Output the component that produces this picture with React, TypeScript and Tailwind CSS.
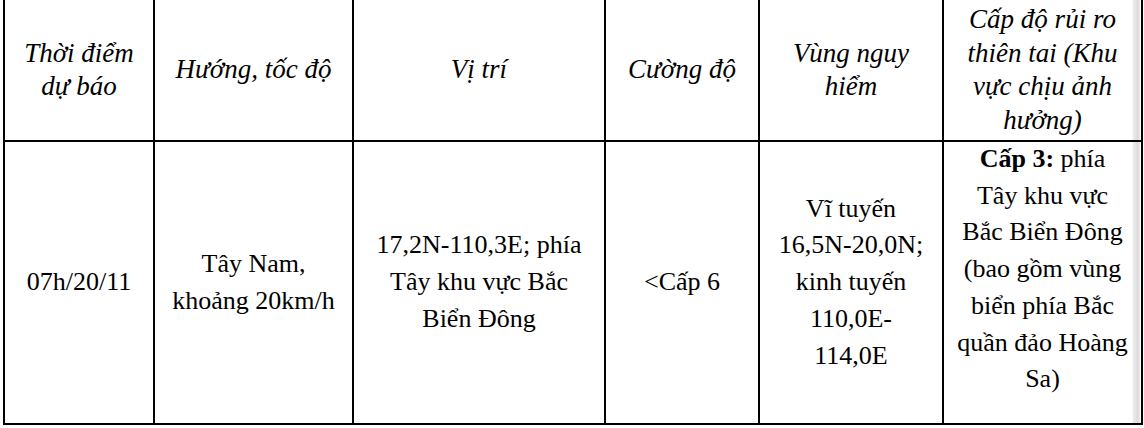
const serif = "font-['Liberation_Serif','Times_New_Roman',serif]"

const headers: string[][] = [
    ["Thời điểm", "dự báo"],
    ["Hướng, tốc độ"],
    ["Vị trí"],
    ["Cường độ"],
    ["Vùng nguy", "hiểm"],
    ["Cấp độ rủi ro", "thiên tai (Khu", "vực chịu ảnh", "hưởng)"],
]

const body: string[][] = [
    ["07h/20/11"],
    ["Tây Nam,", "khoảng 20km/h"],
    ["17,2N-110,3E; phía", "Tây khu vực Bắc", "Biển Đông"],
    ["<Cấp 6"],
    ["Vĩ tuyến", "16,5N-20,0N;", "kinh tuyến", "110,0E-", "114,0E"],
]

const riskLines = [
    "Tây khu vực",
    "Bắc Biển Đông",
    "(bao gồm vùng",
    "biển phía Bắc",
    "quần đảo Hoàng",
    "Sa)",
]

// the light grey strip near the right edge of the last column
const edge =
    "bg-[linear-gradient(to_right,#fff_0,#fff_188px,#eeeeee_189px,#dadada_194px,#efefef_196px,#fff_197px)]"

function Lines({ lines }: { lines: string[] }) {
    return (
        <div className="text-center">
            {lines.map((l, i) => (
                <div key={i} className="whitespace-nowrap">
                    {l}
                </div>
            ))}
        </div>
    )
}

export default function App() {
    return (
        <div className={`w-[1144px] h-[428px] bg-white pl-[3px] text-black ${serif} text-[26px]`}>
            <div className="grid w-[1140px] grid-cols-[148px_197px_250px_152px_182px_197px] grid-rows-[140px_281px] gap-[2px] bg-black px-[2px] pb-[2px]">
                {headers.map((h, i) => (
                    <div
                        key={i}
                        className={`flex items-center justify-center text-[27px] italic leading-[33.5px] ${i === 5 ? edge : "bg-white"}`}
                    >
                        <Lines lines={h} />
                    </div>
                ))}
                {body.map((b, i) => (
                    <div key={i} className="flex items-center justify-center bg-white leading-[36.7px]">
                        <Lines lines={b} />
                    </div>
                ))}
                <div className={`flex items-start justify-center overflow-hidden leading-[36.7px] ${edge}`}>
                    <div className="-mt-[1px] text-center">
                        <div className="whitespace-nowrap">
                            <span className="font-bold">Cấp 3:</span> phía
                        </div>
                        {riskLines.map((l, i) => (
                            <div key={i} className="whitespace-nowrap">
                                {l}
                            </div>
                        ))}
                    </div>
                </div>
            </div>
        </div>
    )
}
